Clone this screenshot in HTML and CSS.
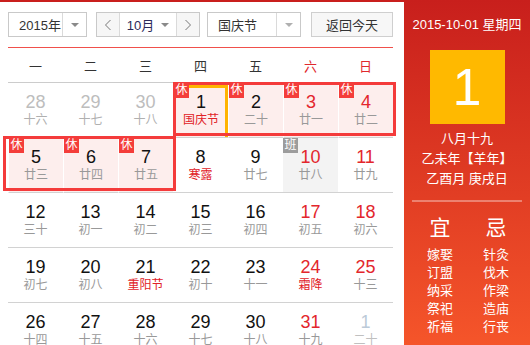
FILE: index.html
```html
<!DOCTYPE html>
<html>
<head>
    <meta charset="UTF-8" />
    <meta name="viewport" content="width=device-width, initial-scale=1.0">
    <link rel="stylesheet" href="styles.css">
</head>
<body>

<div class="calendar">
    <div class="main">
        <div class="inner">
            <div class="toolbar">
                <div class="dropdown year">
                    <span class="dd-text">2015年</span>
                    <span class="dd-arrow"><i class="caret"></i></span>
                </div>
                <div class="month-group">
                    <span class="nav-btn">
                        <svg width="8" height="12" viewBox="0 0 8 12"><path d="M6.5 1 L1.5 6 L6.5 11" fill="none" stroke="#777" stroke-width="1"/></svg>
                    </span>
                    <span class="month-sel">10月 <i class="caret"></i></span>
                    <span class="nav-btn">
                        <svg width="8" height="12" viewBox="0 0 8 12"><path d="M1.5 1 L6.5 6 L1.5 11" fill="none" stroke="#777" stroke-width="1"/></svg>
                    </span>
                </div>
                <div class="dropdown holiday">
                    <span class="dd-text">国庆节</span>
                    <span class="dd-arrow"><i class="caret light"></i></span>
                </div>
                <div class="today-btn">返回今天</div>
            </div>

            <div class="weekdays">
                <span>一</span><span>二</span><span>三</span><span>四</span><span>五</span><span class="red">六</span><span class="red">日</span>
            </div>

            <div class="grid">
                <div class="cell other"><b>28</b><em>十六</em></div>
                <div class="cell other"><b>29</b><em>十七</em></div>
                <div class="cell other"><b>30</b><em>十八</em></div>
                <div class="cell hol today"><i class="badge">休</i><b>1</b><em class="fest">国庆节</em></div>
                <div class="cell hol"><i class="badge">休</i><b>2</b><em>二十</em></div>
                <div class="cell hol wknd"><i class="badge">休</i><b>3</b><em>廿一</em></div>
                <div class="cell hol wknd"><i class="badge">休</i><b>4</b><em>廿二</em></div>

                <div class="cell hol"><i class="badge">休</i><b>5</b><em>廿三</em></div>
                <div class="cell hol"><i class="badge">休</i><b>6</b><em>廿四</em></div>
                <div class="cell hol"><i class="badge">休</i><b>7</b><em>廿五</em></div>
                <div class="cell"><b>8</b><em class="fest">寒露</em></div>
                <div class="cell"><b>9</b><em>廿七</em></div>
                <div class="cell work wknd"><i class="badge gray">班</i><b>10</b><em>廿八</em></div>
                <div class="cell wknd"><b>11</b><em>廿九</em></div>

                <div class="cell"><b>12</b><em>三十</em></div>
                <div class="cell"><b>13</b><em>初一</em></div>
                <div class="cell"><b>14</b><em>初二</em></div>
                <div class="cell"><b>15</b><em>初三</em></div>
                <div class="cell"><b>16</b><em>初四</em></div>
                <div class="cell wknd"><b>17</b><em>初五</em></div>
                <div class="cell wknd"><b>18</b><em>初六</em></div>

                <div class="cell"><b>19</b><em>初七</em></div>
                <div class="cell"><b>20</b><em>初八</em></div>
                <div class="cell"><b>21</b><em class="fest">重阳节</em></div>
                <div class="cell"><b>22</b><em>初十</em></div>
                <div class="cell"><b>23</b><em>十一</em></div>
                <div class="cell wknd"><b>24</b><em class="fest">霜降</em></div>
                <div class="cell wknd"><b>25</b><em>十三</em></div>

                <div class="cell"><b>26</b><em>十四</em></div>
                <div class="cell"><b>27</b><em>十五</em></div>
                <div class="cell"><b>28</b><em>十六</em></div>
                <div class="cell"><b>29</b><em>十七</em></div>
                <div class="cell"><b>30</b><em>十八</em></div>
                <div class="cell wknd"><b>31</b><em>十九</em></div>
                <div class="cell next"><b>1</b><em>二十</em></div>

                <!-- holiday outlines, drawn over the cells -->
                <div class="hol-box box-a"></div>
                <div class="hol-box box-b"></div>
            </div>
        </div>
    </div>

    <div class="side">
        <p class="side-date">2015-10-01 星期四</p>
        <div class="big-day">1</div>
        <div class="lunar">
            <p>八月十九</p>
            <p>乙未年【羊年】</p>
            <p>乙酉月 庚戌日</p>
        </div>
        <div class="side-line"></div>
        <div class="yiji">
            <ul>
                <li class="head">宜</li>
                <li>嫁娶</li>
                <li>订盟</li>
                <li>纳采</li>
                <li>祭祀</li>
                <li>祈福</li>
            </ul>
            <ul>
                <li class="head">忌</li>
                <li>针灸</li>
                <li>伐木</li>
                <li>作梁</li>
                <li>造庙</li>
                <li>行丧</li>
            </ul>
        </div>
    </div>
</div>

</body>
</html>
```

FILE: styles.css
```css
* {
    box-sizing: border-box;
}

body {
    margin: 0;
    background: #fff;
    font-family: "Liberation Sans", Arial, "Noto Sans CJK SC", sans-serif;
    color: #333;
}

.calendar {
    display: flex;
    width: 530px;
    height: 345px;
    overflow: hidden;
}

/* left part: toolbar + month grid */
.main {
    width: 404px;
    border-top: 2px solid #c91f1d;
    padding-left: 8px;
}

.inner {
    width: 385px;
}

.toolbar {
    display: flex;
    align-items: center;
    padding: 10px 0;
    border-bottom: 1px solid #f0504b;
    font-size: 13px;
}

.dropdown {
    display: flex;
    height: 25px;
    border: 1px solid #c9c9c9;
}

.dd-text {
    display: flex;
    align-items: center;
    padding-left: 10px;
}

.dd-arrow {
    display: flex;
    align-items: center;
    justify-content: center;
    width: 24px;
    border-left: 1px solid #dadada;
}

.caret {
    display: inline-block;
    width: 0;
    height: 0;
    border: 4px solid transparent;
    border-top: 4px solid #8a8a8a;
    border-bottom: 0;
}

    .caret.light {
        border-top-color: #b0b0b0;
    }

.year {
    width: 79px;
}

    .year .dd-text {
        width: 54px;
    }

.holiday {
    width: 94px;
    margin-left: 7px;
}

    .holiday .dd-text {
        width: 69px;
    }

.month-group {
    display: flex;
    height: 25px;
    width: 104px;
    margin-left: 9px;
    border: 1px solid #c9c9c9;
}

.nav-btn {
    display: flex;
    align-items: center;
    justify-content: center;
    width: 22px;
    background: #f6f6f6;
}

.month-sel {
    display: flex;
    align-items: center;
    justify-content: center;
    gap: 7px;
    width: 60px;
    border-left: 1px solid #dadada;
    border-right: 1px solid #dadada;
    color: #2c2a5a;
}

.today-btn {
    display: flex;
    align-items: center;
    justify-content: center;
    width: 82px;
    height: 25px;
    margin-left: 10px;
    border: 1px solid #cfcfcf;
    background: #f7f7f7;
}

.weekdays {
    display: grid;
    grid-template-columns: repeat(7, 55px);
    height: 35px;
    border-bottom: 1px solid #cccccc;
    align-items: center;
    text-align: center;
    font-size: 13px;
    color: #333;
}

    .weekdays .red {
        color: #e0282d;
    }

.grid {
    position: relative;
    display: grid;
    grid-template-columns: repeat(7, 55px);
    grid-auto-rows: 55px;
}

.cell {
    position: relative;
    padding-top: 9px;
    border-bottom: 1px solid #d2d2d2;
    text-align: center;
}

    .cell b {
        display: block;
        font-weight: normal;
        font-size: 18px;
        line-height: 20px;
        color: #111;
    }

    .cell em {
        display: block;
        font-style: normal;
        font-size: 12px;
        line-height: 16px;
        color: #999;
    }

    .cell.wknd b {
        color: #e3262c;
    }

    .cell em.fest {
        color: #e12127;
    }

    .cell.other b {
        color: #bdbdbd;
    }

    .cell.other em {
        color: #b0b0b0;
    }

    .cell.next b {
        color: #bccad8;
    }

    .cell.next em {
        color: #c0c0c0;
    }

    .cell.hol {
        background: #fdeeed;
        border-left: 1px solid #fff;
    }

    .cell.today {
        box-shadow: inset -3px 5px 0 #ffb400;
    }

    .cell.work {
        background: #f3f3f3;
    }

.badge {
    position: absolute;
    top: 0;
    left: 0;
    z-index: 2;
    width: 15px;
    height: 15px;
    background: #f43d3a;
    color: #fff;
    font-style: normal;
    font-size: 12px;
    line-height: 15px;
    text-align: center;
}

    .badge.gray {
        background: #9c9c9c;
    }

/* red outlines round the holiday days */
.hol-box {
    position: absolute;
    z-index: 1;
    border: 3px solid #f43b3b;
    pointer-events: none;
}

.box-a {
    left: 165px;
    top: -1px;
    width: 223px;
    height: 54px;
}

.box-b {
    left: -5px;
    top: 53px;
    width: 173px;
    height: 55px;
}

/* right panel */
.side {
    width: 126px;
    background: linear-gradient(to bottom, #c81f1c, #f5552a);
    color: #fff;
    text-align: center;
}

.side-date {
    margin: 17px 0 0;
    font-size: 13px;
    line-height: 16px;
}

.big-day {
    width: 75px;
    height: 74px;
    margin: 17px auto 0;
    background: #ffb900;
    font-size: 52px;
    line-height: 74px;
}

.lunar {
    margin-top: 5px;
    font-size: 13px;
    line-height: 20px;
}

    .lunar p {
        margin: 0;
    }

.side-line {
    width: 110px;
    height: 2px;
    margin: 11px auto 0;
    background: rgba(255, 255, 255, 0.35);
}

.yiji {
    display: flex;
    padding-left: 8px;
    margin-top: 12px;
}

    .yiji ul {
        width: 56px;
        margin: 0;
        padding: 0;
        list-style: none;
        font-size: 13px;
        line-height: 18px;
    }

    .yiji li.head {
        font-size: 21px;
        line-height: 28px;
        margin-bottom: 4px;
    }
```
